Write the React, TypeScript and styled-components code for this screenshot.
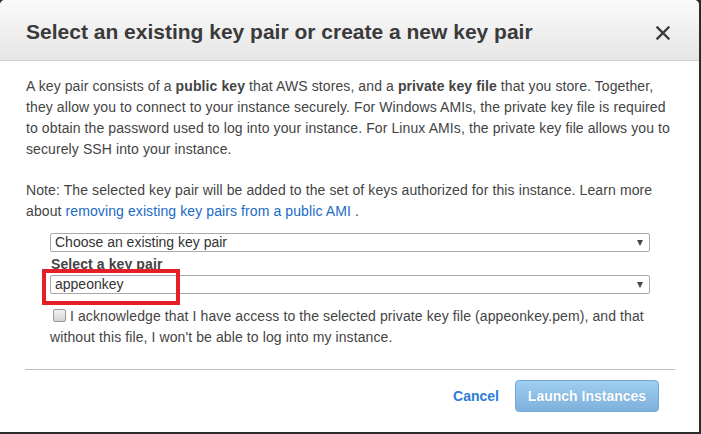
import React from "react";
import styled, { createGlobalStyle } from "styled-components";

const Global = createGlobalStyle`
  html, body { margin: 0; padding: 0; background: #2b2b2b; }
  body { font-family: "Liberation Sans", Arial, sans-serif; }
`;

const Modal = styled.div`
  width: 699px;
  height: 432px;
  background: #fff;
  border-radius: 5px 5px 0 0;
  overflow: hidden;
  display: flex;
  flex-direction: column;
`;

const Header = styled.div`
  height: 60px;
  flex: none;
  display: flex;
  align-items: center;
  justify-content: space-between;
  padding: 0 29px 0 26px;
  background: linear-gradient(#fbfafb, #e6e6e6);
  border-bottom: 1px solid #cfcfcf;
`;

const Title = styled.h1`
  margin: 0;
  font-size: 21px;
  font-weight: bold;
  color: #3a3a3a;
  padding-top: 3px;
`;

const Close = styled.button`
  border: 0;
  background: none;
  padding: 0;
  width: 14px;
  height: 14px;
  margin-top: 5px;
  display: flex;
  cursor: pointer;
`;

const Body = styled.div`
  padding: 15px 24px 0 25px;
  color: #444;
  font-size: 14px;
  line-height: 21px;
  letter-spacing: 0.1px;
`;

const Para = styled.p<{ $gap?: number }>`
  margin: 0 0 ${(p) => p.$gap ?? 0}px 0;
  padding-left: 1px;
`;

const Link = styled.a`
  color: #1a6bc2;
  text-decoration: none;
  margin-left: 4px;
`;

const Form = styled.div`
  margin-left: 25px;
  width: 600px;
  display: flex;
  flex-direction: column;
`;

const SelectBox = styled.div`
  position: relative;
  height: 17px;
  border: 1px solid #a9a9a9;
  border-radius: 2px;
  background: #fff;
  display: flex;
  align-items: center;
  justify-content: space-between;
  padding: 0 6px 0 4px;
  color: #333;
  font-size: 14px;
  line-height: 17px;
  letter-spacing: 0;
`;

const Arrow = styled.span`
  width: 0;
  height: 0;
  border-left: 3.5px solid transparent;
  border-right: 3.5px solid transparent;
  border-top: 6px solid #444;
  margin-top: 1px;
`;

const Highlight = styled.span`
  position: absolute;
  left: -9px;
  top: -7px;
  width: 130px;
  height: 28px;
  border: 4px solid #e51e27;
  pointer-events: none;
`;

const Label = styled.div`
  font-weight: bold;
  color: #444;
  font-size: 14px;
  line-height: 21px;
  padding-left: 1px;
  margin: 2px 0 0;
`;

const Ack = styled.div`
  margin-top: 12px;
  color: #444;
  font-size: 14px;
  line-height: 21px;
`;

const Check = styled.span`
  display: inline-block;
  width: 11px;
  height: 11px;
  border: 1px solid #9a9a9a;
  border-radius: 2px;
  background: linear-gradient(#f2f2f2, #d4d4d4);
  margin: 0 4px 0 3px;
  vertical-align: -1px;
`;

const Rule = styled.hr`
  border: 0;
  border-top: 1px solid #bdbdbd;
  margin: 21px 0 0 0;
  width: 650px;
`;

const Footer = styled.div`
  display: flex;
  justify-content: flex-end;
  align-items: center;
  gap: 16px;
  padding: 10px 40px 0 0;
`;

const Cancel = styled.button`
  border: 0;
  background: none;
  padding: 0;
  font-family: "Liberation Sans", Arial, sans-serif;
  font-weight: bold;
  font-size: 14px;
  color: #2a7dd6;
  cursor: pointer;
`;

const Primary = styled.button`
  width: 144px;
  height: 32px;
  border: 1px solid #73a9d6;
  border-radius: 4px;
  background: linear-gradient(#9dcdf0, #7fb1dc);
  color: #fff;
  font-family: "Liberation Sans", Arial, sans-serif;
  font-weight: bold;
  font-size: 14px;
  text-shadow: 0 0 1px rgba(60, 110, 160, 0.4);
  cursor: pointer;
`;

export default function App() {
  return (
    <>
      <Global />
      <Modal>
        <Header>
          <Title>Select an existing key pair or create a new key pair</Title>
          <Close aria-label="Close">
            <svg width="14" height="14" viewBox="0 0 14 14">
              <path d="M1.5 1.5 L12.5 12.5 M12.5 1.5 L1.5 12.5" stroke="#3d3d3d" strokeWidth="2.4" strokeLinecap="square" />
            </svg>
          </Close>
        </Header>
        <Body>
          <Para $gap={20}>
            A key pair consists of a <b>public key</b> that AWS stores, and a <b>private key file</b> that you store.
            Together, they allow you to connect to your instance securely. For Windows AMIs, the private key file is
            required to obtain the password used to log into your instance. For Linux AMIs, the private key file allows
            you to securely SSH into your instance.
          </Para>
          <Para $gap={11}>
            Note: The selected key pair will be added to the set of keys authorized for this instance. Learn more about
            <Link href="#">removing existing key pairs from a public AMI</Link> .
          </Para>
          <Form>
            <SelectBox>
              <span>Choose an existing key pair</span>
              <Arrow />
            </SelectBox>
            <Label>Select a key pair</Label>
            <SelectBox>
              <span>appeonkey</span>
              <Arrow />
              <Highlight />
            </SelectBox>
            <Ack>
              <Check />
              I acknowledge that I have access to the selected private key file (appeonkey.pem), and that without this
              file, I won't be able to log into my instance.
            </Ack>
          </Form>
          <Rule />
        </Body>
        <Footer>
          <Cancel>Cancel</Cancel>
          <Primary>Launch Instances</Primary>
        </Footer>
      </Modal>
    </>
  );
}
